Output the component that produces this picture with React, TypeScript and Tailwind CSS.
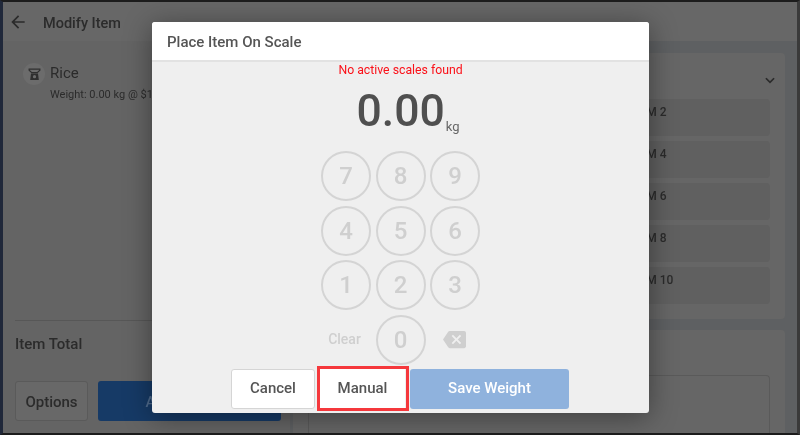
const font = "font-['Roboto',sans-serif]";

function Key({ label }: { label: string }) {
  return (
    <div className="flex h-[50px] w-[50px] items-center justify-center rounded-full border-2 border-[#d4d4d4] text-[24px] font-medium text-[#cfcfcf]">
      {label}
    </div>
  );
}

function ScaleIcon() {
  return (
    <svg viewBox="0 0 24 24" className="h-[13px] w-[13px]" fill="#2f2f2f">
      <path d="M2 2h20v2l-5 4.500H7L2 4z" fill="none" stroke="#2f2f2f" strokeWidth="2" />
      <path d="M5.500 10h13l1.500 12H4z" />
      <circle cx="12" cy="16" r="3" fill="#6c6c6c" />
    </svg>
  );
}

function RowItem({ label }: { label: string }) {
  return (
    <div className="flex h-[37px] items-start rounded-sm bg-[#606060] pl-[7px] pt-[4px] text-[12px] font-medium text-[#2b2b2b]">
      {label}
    </div>
  );
}

export default function App() {
  return (
    <div className={`${font} relative h-[435px] w-[800px] overflow-hidden border-y-2 border-l-[3px] border-r-[3px] border-y-[#1c1c1c] border-l-[#20283a] border-r-[#3a3a3a] bg-[#5e6062] blur-[0.3px]`}>
      <div className="flex h-[39px] items-center bg-[#676767] pl-[5px]">
        <svg viewBox="0 0 24 24" className="h-[20px] w-[20px]" fill="#2b2b2b">
          <path d="M20 11H7.830l5.590-5.590L12 4l-8 8 8 8 1.410-1.410L7.830 13H20v-2z" />
        </svg>
        <span className="ml-[15px] mt-[4px] text-[14.500px] font-medium text-[#2b2b2b]">Modify Item</span>
      </div>

      <div className="flex h-[392px]">
        <div className="flex w-[287px] shrink-0 flex-col bg-[#646464] pl-[12px] pr-[9px]">
          <div className="flex h-[279px] items-start pl-[8px] pt-[22px]">
            <div className="flex h-[22px] w-[22px] shrink-0 items-center justify-center rounded-full bg-[#6c6c6c]">
              <ScaleIcon />
            </div>
            <div className="ml-[5px]">
              <div className="text-[15px] leading-[20px] text-[#2b2b2b]">Rice</div>
              <div className="mt-[4px] whitespace-nowrap text-[11px] leading-[16px] text-[#2b2b2b]">Weight: 0.00 kg @ $1.00/kg</div>
            </div>
          </div>
          <div className="border-t border-[#575757] pt-[13px] text-[15px] font-medium leading-[20px] text-[#2b2b2b]">Item Total</div>
          <div className="mt-[27px] flex gap-[10px]">
            <div className="flex h-[40px] w-[73px] items-center justify-center rounded-[3px] border border-[#5a5a5a] bg-[#686868] pt-[2px] text-[15px] font-medium text-[#2b2b2b]">Options</div>
            <div className="flex h-[40px] flex-1 items-center justify-center rounded-[3px] bg-[#163a66] pt-[2px] text-[15px] font-medium text-[#4e6a8c]">Add To Order</div>
          </div>
        </div>

        <div className="flex flex-1 flex-col pl-[3px] pr-[12px] pt-[12px]">
          <div className="h-[266px] rounded-sm bg-[#666666] px-[15px]">
            <div className="flex h-[46px] items-center justify-end pt-[8px]">
              <svg viewBox="0 0 24 24" className="-mr-[7px] h-[14px] w-[14px]" fill="none" stroke="#2b2b2b" strokeWidth="3">
                <path d="M5 9l7 7 7-7" />
              </svg>
            </div>
            <div className="grid grid-cols-[1fr_148px] gap-x-[10px] gap-y-[5px]">
              {["", "ITEM 2", "", "ITEM 4", "", "ITEM 6", "", "ITEM 8", "", "ITEM 10"].map((t, i) => (
                <RowItem key={i} label={t} />
              ))}
            </div>
          </div>
          <div className="mt-[11px] flex-1 rounded-t-sm bg-[#666666] px-[15px] pt-[45px]">
            <div className="h-full rounded-t-sm border border-b-0 border-[#5a5a5a]" />
          </div>
        </div>
      </div>

      <div className="absolute left-[149px] top-[20px] flex h-[391px] w-[497px] flex-col overflow-hidden rounded-[3px] bg-[#efefef] shadow-[0_4px_28px_rgba(0,0,0,0.4)]">
        <div className="flex h-[40px] shrink-0 items-center border-b-2 border-[#e2e2e2] bg-white pl-[15px] pt-[2px] text-[15px] font-medium text-[#555555]">
          Place Item On Scale
        </div>
        <div className="text-center text-[12.250px] leading-[16px] text-[#fb1018]">No active scales found</div>
        <div className="mt-[6px] flex h-[55px] items-end justify-center pl-[15px]">
          <span className="text-[44.500px] font-medium leading-[55px] text-[#4f4f4f]">0.00</span>
          <span className="mb-[4px] ml-[1px] text-[13px] leading-[16px] text-[#666666]">kg</span>
        </div>
        <div className="mt-[12px] grid w-[159px] grid-cols-3 gap-x-[4.500px] gap-y-[4.500px] self-center">
          {["7", "8", "9", "4", "5", "6", "1", "2", "3"].map((k) => (
            <Key key={k} label={k} />
          ))}
          <div className="flex items-center justify-center pr-[3px] text-[14px] font-medium text-[#cfcfcf]">Clear</div>
          <Key label="0" />
          <div className="flex items-center justify-center pr-[2px]">
            <svg viewBox="0 0 24 24" className="h-[23px] w-[23px]" fill="#cfcfcf">
              <path d="M22 3H7c-.690 0-1.230.350-1.590.880L0 12l5.410 8.110c.360.530.900.890 1.590.890h15c1.100 0 2-.900 2-2V5c0-1.100-.900-2-2-2zm-3 12.590L17.590 17 14 13.410 10.410 17 9 15.590 12.590 12 9 8.410 10.410 7 14 10.590 17.590 7 19 8.410 15.410 12 19 15.590z" />
            </svg>
          </div>
        </div>
        <div className="mt-[4px] flex h-[40px] items-stretch pl-[79px]">
          <div className="flex w-[84px] items-center justify-center rounded-[3px] border border-[#d5d5d5] bg-white text-[15px] font-medium text-[#555555]">Cancel</div>
          <div className="relative ml-[5px] flex w-[85px] items-center justify-center bg-white text-[15px] font-medium text-[#555555]">
            Manual
            <div className="absolute -bottom-[2px] -left-[3px] -right-[4px] -top-[3px] border-[3.500px] border-[#f5383c]" />
          </div>
          <div className="ml-[5px] flex w-[159px] items-center justify-center rounded-[3px] bg-[#8fb2dd] text-[15px] font-medium text-white">Save Weight</div>
        </div>
      </div>
    </div>
  );
}
